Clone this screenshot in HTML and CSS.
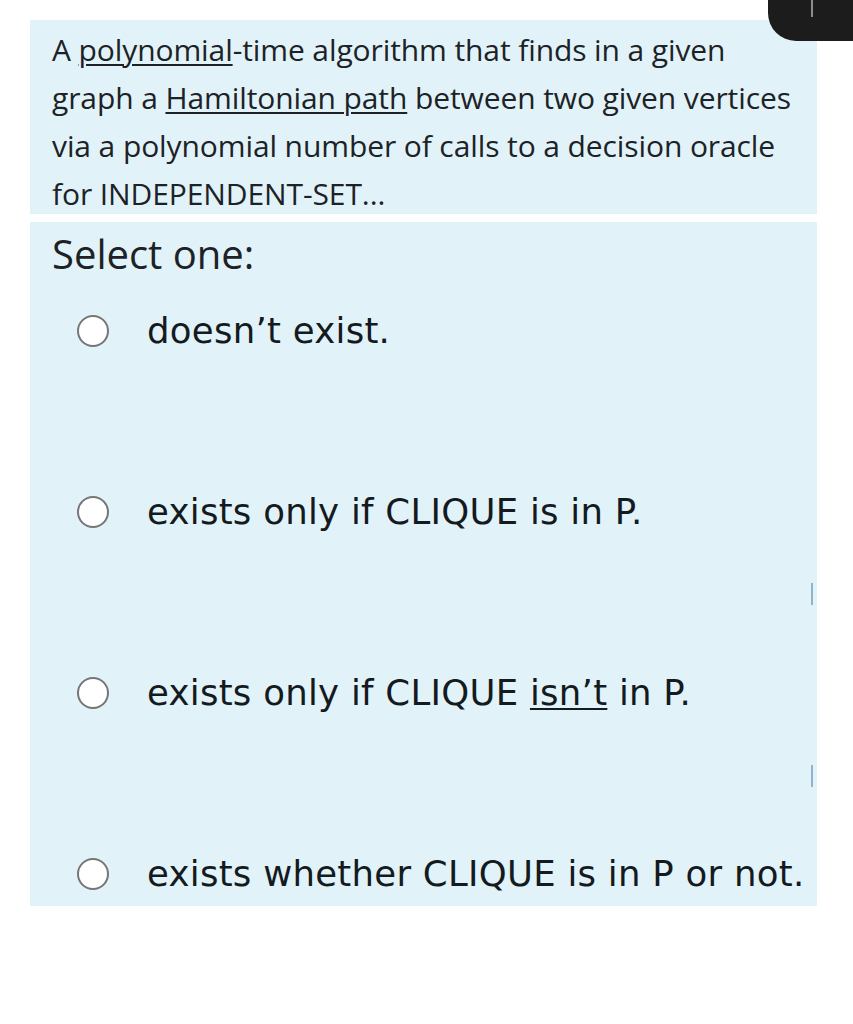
FILE: index.html
```html
<!DOCTYPE html>
<html>
<head>
<meta charset="utf-8">
<link rel="stylesheet" href="styles.css">
</head>
<body>
<div class="tab"><span class="tab-line"></span></div>
<div class="page">
  <div class="qtext">A <u>polynomial</u>-time algorithm that finds in a given<br>graph a <u>Hamiltonian path</u> between two given vertices<br>via a polynomial number of calls to a decision oracle<br>for INDEPENDENT-SET...</div>
  <div class="answers">
    <div class="prompt">Select one:</div>
    <div class="options">
      <div class="opt"><span class="radio"></span><span class="label">doesn’t exist.</span></div>
      <div class="opt"><span class="radio"></span><span class="label">exists only if CLIQUE is in P.</span></div>
      <div class="opt"><span class="radio"></span><span class="label">exists only if CLIQUE <u>isn’t</u> in P.</span></div>
      <div class="opt"><span class="radio"></span><span class="label">exists whether CLIQUE is in P or not.</span></div>
    </div>
    <span class="mark mark1"></span>
    <span class="mark mark2"></span>
  </div>
</div>
</body>
</html>
```
FILE: styles.css
```css
html, body {
  margin: 0;
  padding: 0;
  background: #ffffff;
}
body {
  font-family: "Open Sans", "Liberation Sans", sans-serif;
  color: #1d2226;
  width: 853px;
  height: 1024px;
  overflow: hidden;
  position: relative;
}
.page {
  padding: 20px 36px 0 30px;
  display: flex;
  flex-direction: column;
  gap: 8px;
}
.qtext {
  background: #e1f3f9;
  padding: 6px 4px 0 22px;
  height: 194px;
  box-sizing: border-box;
  font-size: 30px;
  line-height: 48px;
  white-space: nowrap;
  letter-spacing: -0.1px;
}
.qtext u, .label u {
  text-decoration-thickness: 2px;
  text-underline-offset: 3px;
}
.answers {
  background: #e1f3f9;
  position: relative;
  padding: 0 0 0 22px;
}
.prompt {
  font-size: 40px;
  line-height: 48px;
  padding-top: 8px;
  height: 77px;
  box-sizing: border-box;
}
.options {
  display: flex;
  flex-direction: column;
  gap: 117px;
  padding-left: 25px;
}
.opt {
  height: 64px;
  display: flex;
  align-items: center;
  gap: 38px;
}
.radio {
  width: 28px;
  height: 28px;
  border: 2px solid #767676;
  border-radius: 50%;
  background: #ffffff;
  flex: none;
}
.label {
  font-family: "DejaVu Sans", "Open Sans", sans-serif;
  font-size: 35.5px;
  letter-spacing: 0.27px;
  line-height: 40px;
  white-space: nowrap;
  color: #141a1e;
}
.mark {
  position: absolute;
  right: 4px;
  width: 2px;
  height: 22px;
  background: #8fb4d0;
}
.mark1 { top: 361px; }
.mark2 { top: 543px; }
.tab {
  position: absolute;
  top: 0;
  right: 0;
  width: 85px;
  height: 41px;
  background: #1c1c1c;
  border-bottom-left-radius: 28px;
}
.tab-line {
  position: absolute;
  left: 43px;
  top: 0;
  width: 2px;
  height: 17px;
  background: #8c8c8c;
}
```
